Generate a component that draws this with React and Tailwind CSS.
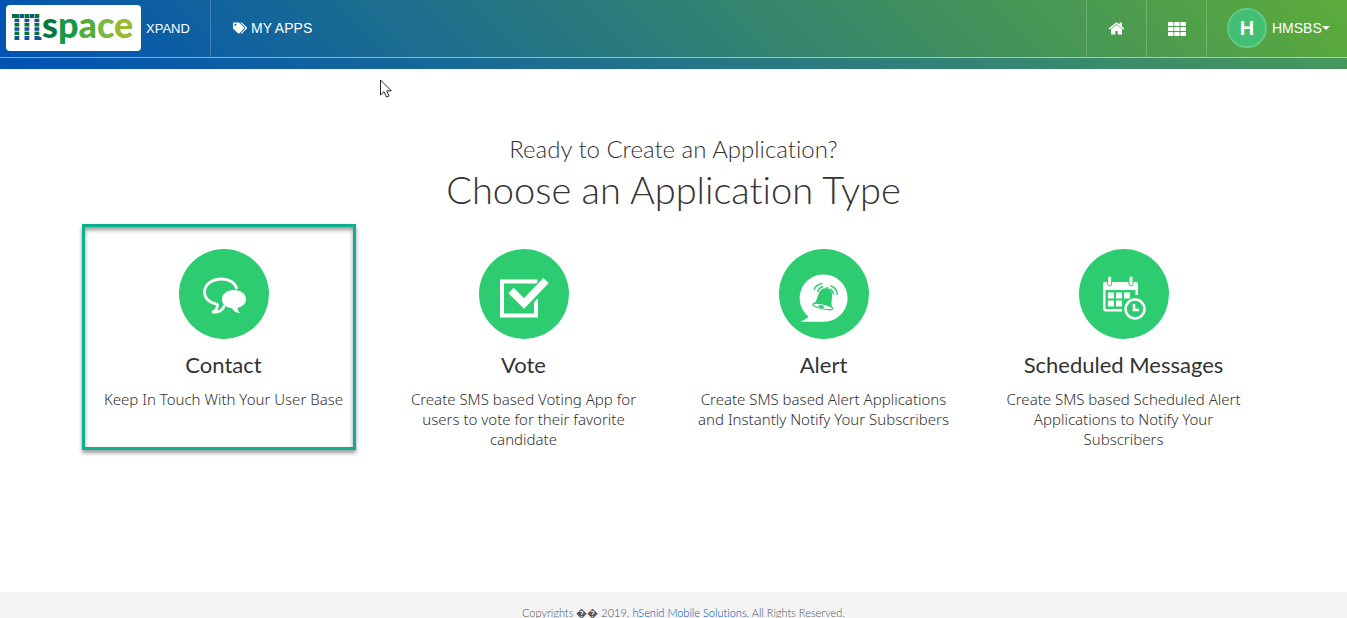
import { FaTags } from "react-icons/fa";

const apps = [
  { title: "Contact", text: "Keep In Touch With Your User Base", icon: <ContactIcon />, selected: true },
  { title: "Vote", text: "Create SMS based Voting App for users to vote for their favorite candidate", icon: <VoteIcon /> },
  { title: "Alert", text: "Create SMS based Alert Applications and Instantly Notify Your Subscribers", icon: <AlertIcon /> },
  { title: "Scheduled Messages", text: "Create SMS based Scheduled Alert Applications to Notify Your Subscribers", icon: <ScheduleIcon /> },
];

function Disc({ children }) {
  return (
    <svg viewBox="0 0 90 90" className="size-[90px]" aria-hidden="true">
      <circle cx="45" cy="45" r="45" fill="#2ecc71" />
      {children}
    </svg>
  );
}

function ContactIcon() {
  return (
    <Disc>
      <path d="M57.5 39C56 33.500 50 30 42.500 30C32.500 30 25.500 36 25.500 43C25.500 49 30.500 53.500 38.500 55.500C38.500 59 37 61.500 34 63C39 63.500 43.500 61.500 45 57.500" fill="none" stroke="#fff" strokeWidth="2.8" strokeLinecap="round" strokeLinejoin="round" />
      <path d="M55 41C62 41 67 45 67 50.200C67 54.500 63.500 57.600 58.500 58.800C58.700 61 59.500 62.800 61 64.200C57.500 64 54.500 62 53 59.200C46.500 58.500 43 54.800 43 50.200C43 45 48 41 55 41Z" fill="#fff" />
    </Disc>
  );
}

function VoteIcon() {
  return (
    <Disc>
      <path d="M58.500 32.500H23V66.500H57V50" fill="none" stroke="#fff" strokeWidth="4" />
      <path d="M32 43L45 56L67 32" fill="none" stroke="#2ecc71" strokeWidth="11" />
      <path d="M32 41.500L45 54.500L67 31.500" fill="none" stroke="#fff" strokeWidth="7.500" />
    </Disc>
  );
}

function AlertIcon() {
  return (
    <Disc>
      <path d="M45 25.500A23.600 23.600 0 0 1 45 72.700H21.500C25 71 28 69.500 29.500 67.500A23.600 23.600 0 0 1 45 25.500Z" fill="#fff" />
      <g transform="rotate(13 45 50)">
        <path d="M35 57.500C38.500 54.500 38 51 38.500 46.500C39 42 41.500 39.500 44.500 39.200V37.800H47V39.200C50 39.500 52 42 52.500 46.500C53 51 53 54.500 56 57.500Z" fill="#2ecc71" />
        <ellipse cx="45.500" cy="57.500" rx="10.300" ry="2.400" fill="#fff" stroke="#2ecc71" strokeWidth="1.200" />
        <ellipse cx="44" cy="58" rx="3" ry="1.300" fill="#2ecc71" />
      </g>
      <path d="M35 41Q37 35 43.500 34.500M38.500 43Q40 38.500 44 37.500M51.500 36.500Q58 39 58.500 46M50.500 40Q54 41.500 54.500 45.500" fill="none" stroke="#2ecc71" strokeWidth="1.400" />
    </Disc>
  );
}

function ScheduleIcon() {
  return (
    <Disc>
      <path d="M26 33H57Q59 33 59 35V46H56.500V41H26.500V60H43V62.500H27Q24 62.500 24 59.500V35Q24 33 26 33Z" fill="#fff" />
      {[30.7, 52].map((x) => (
        <rect key={x} x={x - 2} y="27" width="4" height="10" rx="2" fill="#fff" stroke="#2ecc71" strokeWidth="1" />
      ))}
      {[29, 37, 45].map((x) => (
        <rect key={x} x={x} y="43.500" width="6" height="6" fill="#fff" />
      ))}
      {[29, 37].map((x) => (
        <rect key={x} x={x} y="51.500" width="6" height="6" fill="#fff" />
      ))}
      <circle cx="56" cy="60" r="11.500" fill="#2ecc71" />
      <circle cx="56" cy="60" r="9.500" fill="#2ecc71" stroke="#fff" strokeWidth="2.500" />
      <path d="M55 55V61H60" fill="none" stroke="#fff" strokeWidth="2.500" />
    </Disc>
  );
}

function Logo() {
  return (
    <span className="flex h-[46px] w-[135px] items-center rounded-[4px] bg-white pl-1.5">
      <svg viewBox="0 0 30 27" className="h-[27px] w-[30px] shrink-0" aria-hidden="true">
        {[2.5, 12.5, 22.5].map((x) => (
          <g key={x}>
            <rect x={x} y="0" width="4.800" height="4" fill="#00753a" />
            <rect x={x} y="4.700" width="4.800" height="3.500" fill="#1d4f95" />
            <rect x={x} y="9" width="4.800" height="3.500" fill="#00753a" />
            <rect x={x} y="13.300" width="4.800" height="3.500" fill="#1d4f95" />
            <rect x={x} y="17.600" width="4.800" height="3.500" fill="#00753a" />
            <rect x={x} y="22" width="4.800" height="4" fill="#1d4f95" />
          </g>
        ))}
        <rect x="0" y="0" width="3" height="4" fill="#00753a" />
        <rect x="7.700" y="0" width="4.300" height="4" fill="#1d4f95" />
        <rect x="17.700" y="0" width="4.300" height="4" fill="#1d4f95" />
        <path d="M27 22.500L29.500 23.500V26H25Z" fill="#1d4f95" />
      </svg>
      <span className="pb-2 font-[Lato,sans-serif] text-[36px] leading-9 font-black">
        <span className="text-[#00793d]">s</span>
        <span className="text-[#149a48]">p</span>
        <span className="text-[#4fae3e]">a</span>
        <span className="text-[#78b944]">c</span>
        <span className="text-[#9ab92c]">e</span>
      </span>
    </span>
  );
}

export default function App() {
  return (
    <div className="flex min-h-screen flex-col overflow-x-hidden bg-white font-[Lato,sans-serif] text-[#333] [font-variant-ligatures:none]">
      <header className="bg-[linear-gradient(45deg,#0052b4,#4a9a58)] pb-[11px]">
        <nav className="flex h-[58px] border-b border-white/50 bg-[linear-gradient(45deg,#0052b4,#5cab3a)] pb-0.5 font-['Liberation_Sans',sans-serif] text-sm text-white">
          <a href="#home" className="-mb-0.5 flex w-[211px] items-center gap-[5px] border-r border-white/20 pb-0.5 pl-1.5">
            <Logo />
            <span className="pt-1 text-[13px]">XPAND</span>
          </a>
          <a href="#apps" className="flex items-center gap-1 px-[22px]">
            <FaTags className="size-3.5" />
            MY APPS
          </a>
          <div className="-mb-0.5 ml-auto flex">
            <a href="#home" aria-label="Home" className="flex w-[60px] items-center justify-center border-l border-white/20">
              <svg viewBox="0 0 1792 1792" className="size-[17px] fill-white" aria-hidden="true">
                <path d="M1472 992v480q0 26-19 45t-45 19h-384v-384h-256v384h-384q-26 0-45-19t-19-45v-480q0-1 .5-3t.5-3l575-474 575 474q1 2 1 6zm223-69l-62 74q-8 9-21 11h-3q-13 0-21-7l-692-577-692 577q-12 8-24 7-13-2-21-11l-62-74q-8-10-7-23.500t11-21.500l719-599q32-26 76-26t76 26l244 204v-195q0-14 9-23t23-9h192q14 0 23 9t9 23v408l219 182q10 8 11 21.500t-7 23.500z" />
              </svg>
            </a>
            <a href="#grid" aria-label="All applications" className="flex w-[60px] items-center justify-center border-l border-white/20">
              <svg viewBox="0 0 18 14" className="h-3.5 w-[18px] fill-white" aria-hidden="true">
                {[0, 5, 10].map((y) => [0, 6.2, 12.4].map((x) => <rect key={`${x}-${y}`} x={x} y={y} width="5.500" height="4" rx="0.800" />))}
              </svg>
            </a>
            <button type="button" className="flex w-[141px] items-center border-l border-white/20 pb-0.5 pl-5">
              <span className="flex size-10 items-center justify-center rounded-full border-2 border-[#63c987] bg-[#42bf72] text-xl font-bold">H</span>
              <span className="pl-[5px]">HMSBS</span>
              <svg viewBox="0 0 8 4" className="h-1 w-2 fill-white" aria-hidden="true"><path d="M0 0H8L4 4Z" /></svg>
            </button>
          </div>
        </nav>
      </header>

      <main className="mx-auto w-full max-w-[1200px] grow pt-[62px] text-center">
        <h1 className="font-light text-[#333]">
          <span className="block text-2xl leading-9">Ready to Create an Application?</span>
          <span className="block text-[38px] leading-[44px]">Choose an Application Type</span>
        </h1>
        <div className="grid grid-cols-4 pt-[38px]">
          {apps.map((app) => (
            <a key={app.title} href="#create" className="relative flex flex-col items-center px-5 pb-2">
              {app.selected && (
                <span className="absolute -top-[25px] left-2 h-[226px] w-[274px] border-3 border-[#0eaf8e] shadow-[0_3px_4px_rgba(0,0,0,0.4),inset_0_3px_4px_rgba(0,0,0,0.4)]" />
              )}
              {app.icon}
              <h2 className="pt-3 text-[22px] leading-7">{app.title}</h2>
              <p className="pt-2.5 font-['Noto_Sans',sans-serif] text-[15px] leading-5 font-light">{app.text}</p>
            </a>
          ))}
        </div>
      </main>

      <footer className="h-[26px] overflow-hidden bg-[#f4f4f4] pt-3 pl-5 text-center text-[11px] leading-[18px] font-light text-[#555]">
        Copyrights �� 2019. <a href="#hsenid" className="text-[#0052b4]">hSenid Mobile Solutions</a>. All Rights Reserved.
      </footer>

      <svg viewBox="0 0 12 19" className="absolute top-[79px] left-[380px] h-[19px] w-3" aria-hidden="true">
        <path d="M0.500 1V16L4 12.700L6.500 18L9 17L6.700 11.800H11.300Z" fill="#fff" stroke="#223" strokeWidth="1" />
      </svg>
    </div>
  );
}
